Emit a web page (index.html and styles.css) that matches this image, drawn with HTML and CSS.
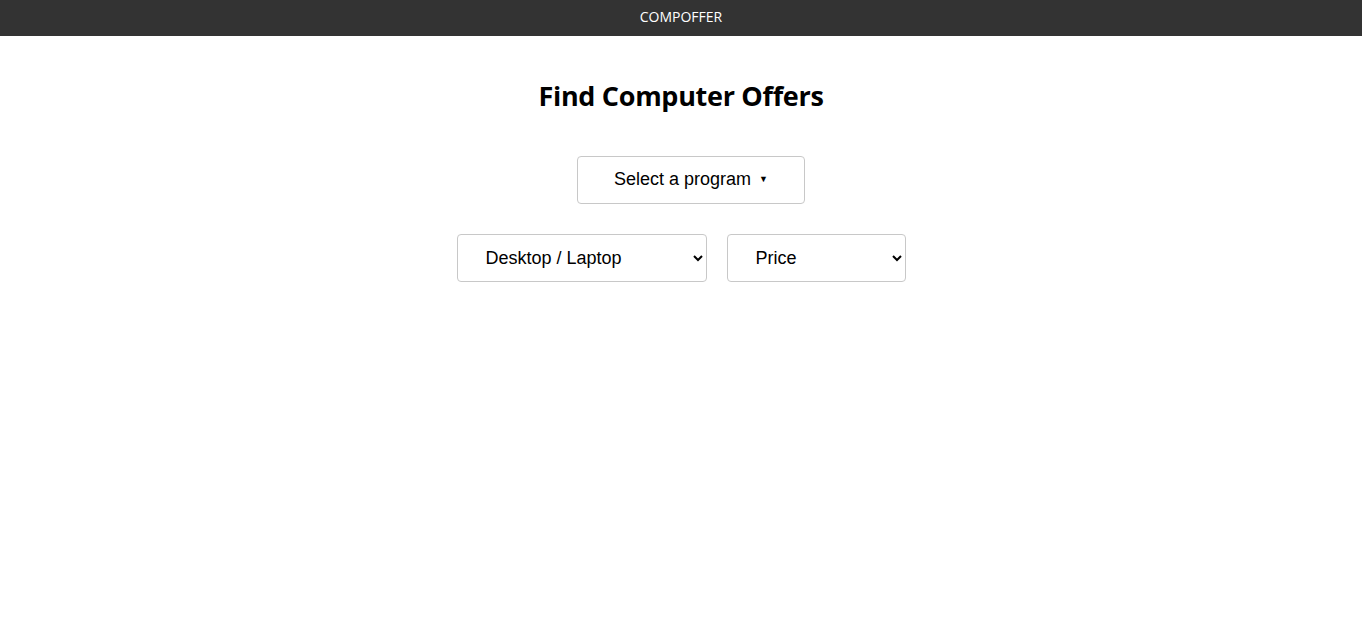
FILE: index.html
```html
<!DOCTYPE html>
<html lang="en">
<head>
<meta charset="utf-8">
<title>Compoffer</title>
<link rel="stylesheet" href="styles.css">
</head>
<body>
<header class="topbar">COMPOFFER</header>
<main class="content">
  <h1 class="title">Find Computer Offers</h1>
  <div class="program-row">
    <button class="program-btn" type="button">Select a program <span class="caret">&#9660;</span></button>
  </div>
  <div class="filter-row">
    <select class="filter filter-type">
      <option>Desktop / Laptop</option>
      <option>Desktop</option>
      <option>Laptop</option>
    </select>
    <select class="filter filter-sort">
      <option>Price</option>
      <option>Name</option>
    </select>
  </div>
</main>
</body>
</html>
```
FILE: styles.css
```css
html, body {
  margin: 0;
  padding: 0;
  background: #fff;
}
body {
  font-family: "Open Sans", "Noto Sans", sans-serif;
  color: #000;
}
.topbar {
  height: 36px;
  background: #333333;
  color: #fff;
  font-size: 14px;
  line-height: 34px;
  text-align: center;
}
.content {
  display: flex;
  flex-direction: column;
  align-items: center;
}
.title {
  margin: 40px 0 0;
  font-family: "Open Sans", sans-serif;
  font-weight: 700;
  font-size: 27px;
  line-height: 40px;
  letter-spacing: -0.3px;
}
.program-row {
  margin-top: 40px;
  padding-left: 20px;
}
.program-btn {
  width: 228px;
  height: 48px;
  background: #fff;
  border: 1px solid #c8c8c8;
  border-radius: 4px;
  font-family: "Liberation Sans", Arial, sans-serif;
  font-size: 18px;
  color: #000;
  padding: 0 0 2px;
}
.caret {
  font-size: 9px;
  vertical-align: 3px;
  margin-left: 3px;
}
.filter-row {
  margin-top: 30px;
  display: flex;
  gap: 20px;
}
.filter {
  height: 48px;
  background: #fff;
  border: 1px solid #c8c8c8;
  border-radius: 4px;
  font-family: "Liberation Sans", Arial, sans-serif;
  font-size: 18px;
  color: #000;
  padding: 0 0 0 24px;
}
.filter-type { width: 250px; }
.filter-sort { width: 179px; }
```
